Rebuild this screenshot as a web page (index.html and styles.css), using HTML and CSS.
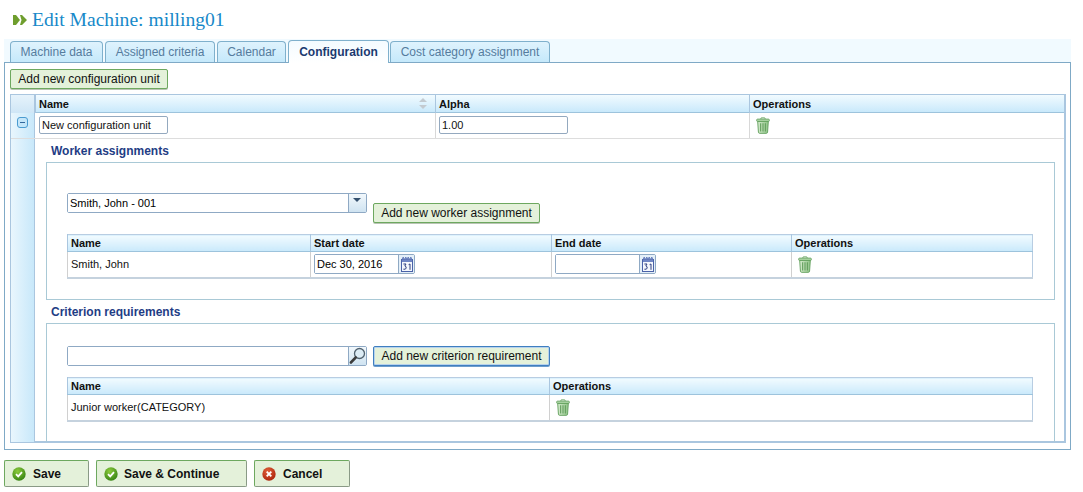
FILE: index.html
```html
<!DOCTYPE html>
<html lang="en">
<head>
    <meta charset="UTF-8">
    <title>Edit Machine</title>
    <link rel="stylesheet" href="styles.css">
</head>
<body>
    <svg class="defs" width="0" height="0">
        <defs>
            <linearGradient id="canGrad" x1="0" x2="1" y1="0" y2="0">
                <stop offset="0" stop-color="#d8ecd0"/>
                <stop offset="1" stop-color="#8cc284"/>
            </linearGradient>
            <radialGradient id="okGrad" cx="0.4" cy="0.3" r="0.8">
                <stop offset="0" stop-color="#8ccb3c"/>
                <stop offset="1" stop-color="#2f7d10"/>
            </radialGradient>
            <radialGradient id="koGrad" cx="0.4" cy="0.3" r="0.8">
                <stop offset="0" stop-color="#e0603a"/>
                <stop offset="1" stop-color="#a82008"/>
            </radialGradient>
            <symbol id="trash" viewBox="0 0 15 18">
                <path d="M5 2.2 L5.6 .8 H9.4 L10 2.2" fill="none" stroke="#6fa868"/>
                <rect x=".7" y="2.2" width="13.6" height="2.4" rx="1" fill="#b8dcb0" stroke="#62a05c"/>
                <path d="M1.8 4.6 H13.2 L12.4 16.2 Q12.3 17.4 11 17.4 H4 Q2.7 17.4 2.6 16.2 Z" fill="url(#canGrad)" stroke="#62a05c"/>
                <path d="M5 6.5 V15.5 M7.5 6.5 V15.5 M10 6.5 V15.5" stroke="#5d9a58" stroke-width="1.1"/>
            </symbol>
            <symbol id="calendar" viewBox="0 0 14 16">
                <rect x="1.5" y="3.5" width="11" height="12" fill="#f4f7fc" stroke="#4a62a8"/>
                <rect x="2" y="4" width="10" height="2" fill="#6f86c4"/>
                <path d="M2 3.5 L3.2 1 L4.4 3.5 L5.8 1 L7 3.5 L8.2 1 L9.6 3.5 L10.8 1 L12 3.5" fill="#7c90c8" stroke="#6077b8" stroke-width=".8"/>
                <path d="M3.4 8 H6 L4.8 10 Q6.4 10.2 6.2 12 Q5.8 13.8 3.4 13.2 M8.6 8.6 L10 8 V13.8" fill="none" stroke="#2c3f80"/>
            </symbol>
            <symbol id="ok" viewBox="0 0 14 14">
                <circle cx="7" cy="7" r="6.7" fill="url(#okGrad)"/>
                <path d="M4 7.2 L6.2 9.4 L10 5.2" fill="none" stroke="#fff" stroke-width="1.8"/>
            </symbol>
            <symbol id="ko" viewBox="0 0 14 14">
                <circle cx="7" cy="7" r="6.7" fill="url(#koGrad)"/>
                <path d="M4.7 4.7 L9.3 9.3 M9.3 4.7 L4.7 9.3" fill="none" stroke="#fff" stroke-width="1.9"/>
            </symbol>
        </defs>
    </svg>

    <h1 class="page-title">
        <svg class="title-icon" width="14" height="10" viewBox="0 0 14 10">
            <path d="M0 0 H3 L7 5 L3 10 H0 Z" fill="#6f9e2e"/>
            <path d="M7 0 H9 L14 5 L9 10 H7 L8.5 5 Z" fill="#6f9e2e"/>
        </svg>
        Edit Machine: milling01
    </h1>

    <div class="tabs">
        <a class="tab tab-machine">Machine data</a>
        <a class="tab tab-criteria">Assigned criteria</a>
        <a class="tab tab-calendar">Calendar</a>
        <a class="tab tab-config active">Configuration</a>
        <a class="tab tab-cost">Cost category assignment</a>
    </div>

    <div class="panel">
        <button class="btn btn-add-unit">Add new configuration unit</button>

        <div class="grid">
            <div class="grid-head">
                <div class="cell-expander"></div>
                <div class="head-name">Name
                    <svg class="sort" width="8" height="11" viewBox="0 0 8 11">
                        <path d="M4 0 L8 4 H0 Z M4 11 L0 7 H8 Z" fill="#c3cad0"/>
                    </svg>
                </div>
                <div class="head-alpha">Alpha</div>
                <div class="head-ops">Operations</div>
            </div>
            <div class="grid-row">
                <div class="cell-expander">
                    <span class="collapse"></span>
                </div>
                <div class="cell-name"><input class="input input-name" value="New configuration unit"></div>
                <div class="cell-alpha"><input class="input input-alpha" value="1.00"></div>
                <div class="cell-ops"><svg class="trash"><use href="#trash"/></svg></div>
            </div>
            <div class="grid-detail">
                <div class="cell-expander"></div>
                <div class="detail">
                    <h3 class="section-title">Worker assignments</h3>
                    <div class="box box-worker">
                        <div class="worker-form">
                            <div class="combo">
                                <input class="combo-input" value="Smith, John - 001">
                                <span class="combo-btn"><i class="arrow"></i></span>
                            </div>
                            <button class="btn btn-worker">Add new worker assignment</button>
                        </div>
                        <table class="list">
                            <tr>
                                <th class="w-name">Name</th>
                                <th class="w-start">Start date</th>
                                <th class="w-end">End date</th>
                                <th>Operations</th>
                            </tr>
                            <tr>
                                <td>Smith, John</td>
                                <td>
                                    <div class="datebox">
                                        <input class="date-input" value="Dec 30, 2016">
                                        <span class="date-btn"><svg width="14" height="16"><use href="#calendar"/></svg></span>
                                    </div>
                                </td>
                                <td>
                                    <div class="datebox">
                                        <input class="date-input" value="">
                                        <span class="date-btn"><svg width="14" height="16"><use href="#calendar"/></svg></span>
                                    </div>
                                </td>
                                <td><svg class="trash"><use href="#trash"/></svg></td>
                            </tr>
                        </table>
                    </div>

                    <h3 class="section-title">Criterion requirements</h3>
                    <div class="box box-criterion">
                        <div class="criterion-form">
                            <div class="combo">
                                <input class="combo-input" value="">
                                <span class="combo-btn search-btn">
                                    <svg width="17" height="18" viewBox="0 0 17 18">
                                        <circle cx="10.5" cy="6.5" r="5" fill="#dcecf5" stroke="#51626f" stroke-width="1.3"/>
                                        <path d="M6.6 10.6 L2 15.4" stroke="#3c3c3c" stroke-width="2.8" stroke-linecap="round"/>
                                    </svg>
                                </span>
                            </div>
                            <button class="btn btn-criterion">Add new criterion requirement</button>
                        </div>
                        <table class="list">
                            <tr>
                                <th class="c-name">Name</th>
                                <th>Operations</th>
                            </tr>
                            <tr>
                                <td>Junior worker(CATEGORY)</td>
                                <td><svg class="trash"><use href="#trash"/></svg></td>
                            </tr>
                        </table>
                    </div>
                </div>
            </div>
        </div>
    </div>

    <div class="actions">
        <button class="action action-save"><svg width="14" height="14"><use href="#ok"/></svg>Save</button>
        <button class="action action-continue"><svg width="14" height="14"><use href="#ok"/></svg>Save &amp; Continue</button>
        <button class="action action-cancel"><svg width="14" height="14"><use href="#ko"/></svg>Cancel</button>
    </div>
</body>
</html>
```

FILE: styles.css
```css
body {
    margin: 0;
    background-color: #fff;
    font-family: "Liberation Sans", Arial, sans-serif;
    font-size: 11px;
    color: #111;
}

.defs {
    display: block;
    height: 0;
}

.page-title {
    display: flex;
    align-items: center;
    height: 39px;
    margin: 0;
    padding-left: 13px;
    box-sizing: border-box;
    font-family: "Liberation Serif", Georgia, serif;
    font-size: 19.6px;
    font-weight: normal;
    color: #1789c9;
}

.title-icon {
    margin-right: 5px;
}

/* Tabs */
.tabs {
    display: flex;
    align-items: flex-end;
    gap: 2px;
    width: 1067px;
    height: 23px;
    margin-left: 4px;
    padding-left: 6px;
    box-sizing: border-box;
    background-color: #f1faff;
}

.tab {
    display: block;
    box-sizing: border-box;
    height: 21px;
    padding-top: 3px;
    text-align: center;
    color: #557c9e;
    font-size: 12px;
    background: linear-gradient(#dff3fd, #c5e9fb);
    border: 1px solid #7fb0cc;
    border-bottom: none;
    border-radius: 4px 4px 0 0;
}

.tab-machine { width: 93px; }
.tab-criteria { width: 110px; }
.tab-calendar { width: 69px; }
.tab-config { width: 101px; margin-right: -1px; }
.tab-cost { width: 160px; }

.tab.active {
    height: 23px;
    padding-top: 4px;
    position: relative;
    margin-bottom: -1px;
    font-weight: bold;
    color: #1b3a70;
    background: linear-gradient(#f4fbff, #fff);
}

/* Main panel */
.panel {
    box-sizing: border-box;
    width: 1067px;
    height: 388px;
    margin-left: 4px;
    padding: 6px 5px 0;
    border: 1px solid #7fa9c6;
}

.btn {
    box-sizing: border-box;
    height: 20px;
    padding: 0;
    font-family: inherit;
    font-size: 12px;
    color: #111;
    background-color: #e4f1da;
    border: 1px solid #6da85f;
    border-radius: 2px;
    box-shadow: 0 1px 0 #b9c4b4;
}

.btn-add-unit { width: 158px; }
.btn-worker { width: 167px; margin-top: 10px; margin-left: 6px; }
.btn-criterion {
    width: 177px;
    margin-left: 6px;
    border: 1px solid #3f7fc0;
    box-shadow: inset 0 0 0 1px #b7d2ec, 0 1px 0 #6d9dcc;
}

/* Configuration grid */
.grid {
    box-sizing: border-box;
    width: 1056px;
    height: 349px;
    margin-top: 5px;
    border: 1px solid #aac6df;
    border-bottom: 2px solid #aac6df;
    border-right-width: 2px;
}

.grid-head,
.grid-row,
.grid-detail {
    display: grid;
    grid-template-columns: 24px 400px 314px 1fr;
}

.grid-detail {
    grid-template-columns: 24px 1fr;
    height: 303px;
}

.grid-head {
    box-sizing: border-box;
    height: 18px;
    font-weight: bold;
    line-height: 18px;
    background: linear-gradient(#f2fbff, #c9e9fb);
    border-bottom: 1px solid #9dc3dc;
}

.grid-head > div + div {
    padding-left: 3px;
    border-left: 1px solid #aac6df;
}

.head-name {
    position: relative;
}

.sort {
    position: absolute;
    right: 8px;
    top: 3px;
}

.grid-row {
    height: 26px;
    box-sizing: border-box;
    border-bottom: 1px solid #ddd;
}

.cell-expander {
    background: linear-gradient(90deg, #e9f6fd, #c8e8fa);
    border-right: 1px solid #aac6df;
}

.grid-head .cell-expander {
    background: linear-gradient(#e6f3fb, #cfe6f6);
}

.grid-row .cell-expander {
    padding: 4px 0 0 6px;
}

.collapse {
    position: relative;
    display: block;
    box-sizing: border-box;
    width: 11px;
    height: 11px;
    background-color: #c4e6f9;
    border: 1px solid #4a9bd0;
    border-radius: 3px;
}

.collapse::after {
    content: "";
    position: absolute;
    left: 2px;
    top: 4px;
    width: 5px;
    height: 1px;
    background-color: #33689c;
}

.cell-name {
    padding: 3px 0 0 4px;
}

.cell-alpha {
    padding: 3px 0 0 3px;
}

.cell-ops {
    padding: 4px 0 0 6px;
}

.cell-alpha,
.cell-ops {
    border-left: 1px solid #d8d8d8;
}

.input {
    box-sizing: border-box;
    height: 18px;
    padding: 0 2px;
    font-family: inherit;
    font-size: 11px;
    color: #111;
    background-color: #fff;
    border: 1px solid #94a9bf;
    border-radius: 2px;
}

.input-name { width: 129px; }
.input-alpha { width: 129px; }

.trash {
    display: block;
    width: 14px;
    height: 17px;
}

.list .trash {
    margin-left: 3px;
}

/* Detail sections */
.detail {
    padding: 0 10px 0 11px;
}

.section-title {
    height: 23px;
    margin: 0;
    padding-left: 5px;
    font-size: 12px;
    line-height: 24px;
    color: #1f3d85;
}

.box {
    box-sizing: border-box;
    width: 1009px;
    padding-left: 20px;
    border: 1px solid #a9c9d6;
}

.box-worker {
    height: 138px;
    padding-top: 30px;
}

.box-criterion {
    height: 119px;
    padding-top: 22px;
    border-bottom: none;
}

.worker-form,
.criterion-form {
    display: flex;
    align-items: flex-start;
}

.combo {
    display: flex;
    box-sizing: border-box;
    width: 300px;
    height: 20px;
    border: 1px solid #8fa9c4;
    border-radius: 2px;
}

.combo-input {
    flex: 1;
    min-width: 0;
    padding: 0 2px;
    font-family: inherit;
    font-size: 11px;
    border: none;
    outline: none;
}

.combo-btn {
    position: relative;
    width: 17px;
    background: linear-gradient(#f2f8fc, #cfe3f1);
    border-left: 1px solid #8fa9c4;
}

.arrow {
    position: absolute;
    left: 4px;
    top: 4px;
    border-left: 4px solid transparent;
    border-right: 4px solid transparent;
    border-top: 4px solid #34506e;
}

.search-btn {
    overflow: hidden;
}

/* Inner tables */
.list {
    width: 966px;
    table-layout: fixed;
    border-collapse: collapse;
    border: 1px solid #b8cde2;
    border-bottom-width: 2px;
    border-bottom-color: #c5d2de;
}

.worker-form + .list {
    margin-top: 11px;
}

.criterion-form + .list {
    margin-top: 11px;
}

.list th {
    height: 17px;
    padding: 0 3px;
    box-sizing: border-box;
    text-align: left;
    background: linear-gradient(#f2fbff, #c9e9fb);
    border-left: 1px solid #aac6df;
    border-bottom: 1px solid #9dc3dc;
}

.list td {
    height: 26px;
    padding: 0 3px;
    box-sizing: border-box;
    border-left: 1px solid #d0d0d0;
}

.w-name { width: 243px; }
.w-start { width: 241px; }
.w-end { width: 240px; }
.c-name { width: 482px; }

.datebox {
    display: flex;
    box-sizing: border-box;
    width: 101px;
    height: 20px;
    border: 1px solid #8fa9c4;
    border-radius: 2px;
}

.date-input {
    box-sizing: border-box;
    width: 83px;
    padding: 0 2px;
    font-family: inherit;
    font-size: 11px;
    border: none;
    outline: none;
}

.date-btn {
    box-sizing: border-box;
    flex: 1;
    padding: 1px 0 0 1px;
    background-color: #e4eff8;
    border-left: 1px solid #8fa9c4;
}

/* Bottom buttons */
.actions {
    display: flex;
    gap: 7px;
    margin: 10px 0 0 4px;
}

.action {
    display: flex;
    align-items: center;
    gap: 7px;
    box-sizing: border-box;
    height: 27px;
    padding: 0 0 0 7px;
    font-family: inherit;
    font-size: 12px;
    font-weight: bold;
    color: #111;
    background-color: #e4f1da;
    border: 1px solid #6da85f;
    border-bottom-color: #8a9a86;
    border-right-color: #8a9a86;
    border-radius: 2px;
}

.action-save { width: 85px; }
.action-continue { width: 151px; gap: 6px; }
.action-cancel { width: 96px; }
```
